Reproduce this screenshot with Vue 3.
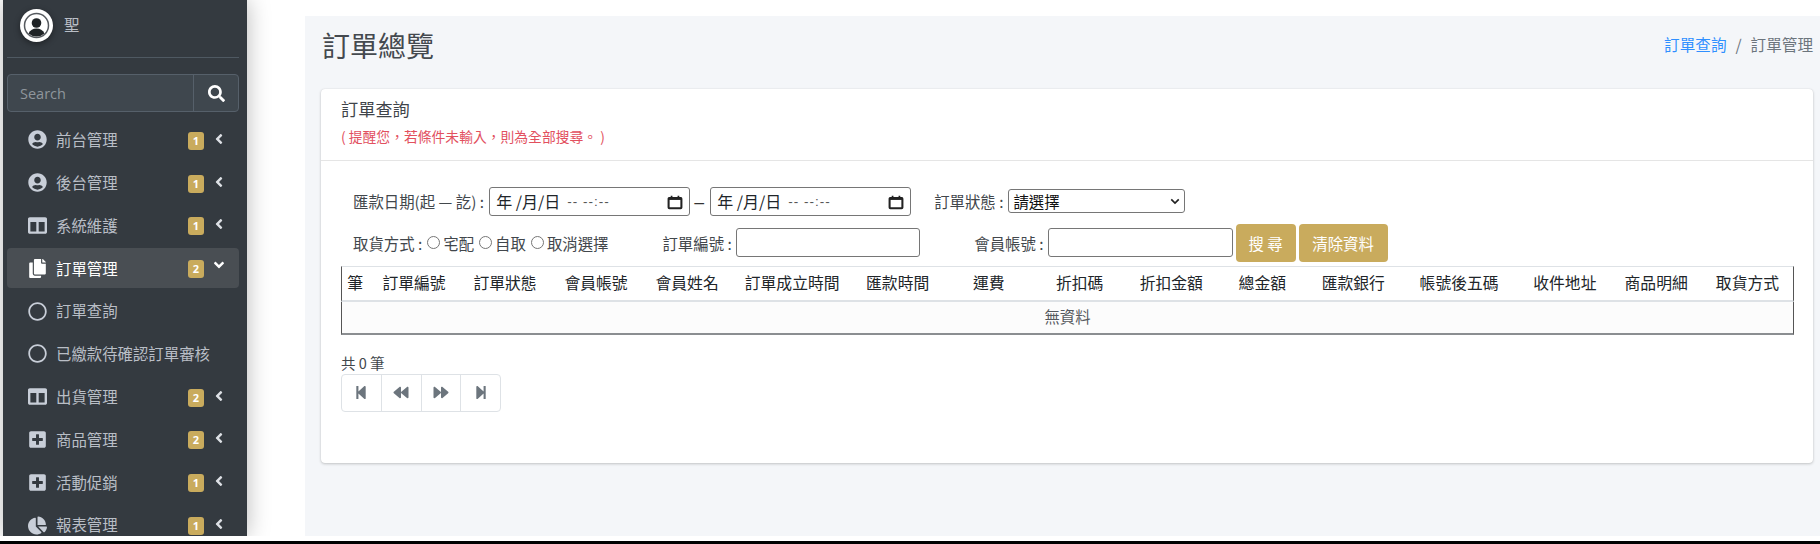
<script setup>
const icons = {
  user: { vb: '0 0 496 512', d: 'M248 8C111 8 0 119 0 256s111 248 248 248 248-111 248-248S385 8 248 8zm0 96c48.6 0 88 39.4 88 88s-39.4 88-88 88-88-39.4-88-88 39.4-88 88-88zm0 344c-58.7 0-111.3-26.6-146.5-68.2 18.8-35.4 55.6-59.8 98.5-59.8 2.4 0 4.8.4 7.1 1.1 13 4.2 26.6 6.9 40.9 6.9 14.3 0 28-2.7 40.9-6.9 2.3-.7 4.7-1.1 7.1-1.1 42.9 0 79.7 24.4 98.5 59.8C359.3 421.4 306.7 448 248 448z' },
  columns: { vb: '0 0 512 512', d: 'M464 32H48C21.49 32 0 53.49 0 80v352c0 26.51 21.49 48 48 48h416c26.51 0 48-21.49 48-48V80c0-26.51-21.49-48-48-48zM224 416H64V160h160v256zm224 0H288V160h160v256z' },
  copy: { vb: '0 0 448 512', d: 'M320 448v40c0 13.255-10.745 24-24 24H24c-13.255 0-24-10.745-24-24V120c0-13.255 10.745-24 24-24h72v296c0 30.879 25.121 56 56 56h168zm0-344V0H152c-13.255 0-24 10.745-24 24v368c0 13.255 10.745 24 24 24h272c13.255 0 24-10.745 24-24V128H344c-13.2 0-24-10.8-24-24zm120.971-31.029L375.029 7.029A24 24 0 0 0 358.059 0H352v96h96v-6.059a24 24 0 0 0-7.029-16.97z' },
  plus: { vb: '0 0 448 512', d: 'M400 32H48C21.5 32 0 53.5 0 80v352c0 26.5 21.5 48 48 48h352c26.5 0 48-21.5 48-48V80c0-26.5-21.5-48-48-48zm-32 252c0 6.6-5.4 12-12 12h-92v92c0 6.6-5.4 12-12 12h-56c-6.6 0-12-5.4-12-12v-92H92c-6.6 0-12-5.4-12-12v-56c0-6.6 5.4-12 12-12h92v-92c0-6.6 5.4-12 12-12h56c6.6 0 12 5.4 12 12v92h92c6.6 0 12 5.4 12 12v56z' },
  pie: { vb: '0 0 544 512', d: 'M527.79 288H290.5l158.03 158.03c6.04 6.04 15.98 6.53 22.19.68 38.7-36.46 65.32-85.61 73.13-140.86 1.34-9.46-6.51-17.85-16.06-17.85zm-15.83-64.8C503.72 103.74 408.26 8.28 288.8.04 279.68-.59 272 7.1 272 16.24V240h223.77c9.14 0 16.82-7.68 16.19-16.8zM224 288V50.71c0-9.55-8.39-17.4-17.84-16.06C86.99 51.49-4.1 155.6.14 280.37 4.5 408.51 114.83 513.59 243.03 511.98c50.4-.63 96.97-16.87 135.26-44.03 7.9-5.6 8.42-17.23 1.57-24.08L224 288z' },
  circle: { vb: '0 0 512 512', d: 'M256 8C119 8 8 119 8 256s111 248 248 248 248-111 248-248S393 8 256 8zm0 448c-110.500 0-200-89.500-200-200S145.500 56 256 56s200 89.500 200 200-89.500 200-200 200z' },
}
const nav = [
  { icon: 'user', label: '前台管理', badge: 1 },
  { icon: 'user', label: '後台管理', badge: 1 },
  { icon: 'columns', label: '系統維護', badge: 1 },
  { icon: 'copy', label: '訂單管理', badge: 2, active: true },
  { icon: 'circle', label: '訂單查詢' },
  { icon: 'circle', label: '已繳款待確認訂單審核' },
  { icon: 'columns', label: '出貨管理', badge: 2 },
  { icon: 'plus', label: '商品管理', badge: 2 },
  { icon: 'plus', label: '活動促銷', badge: 1 },
  { icon: 'pie', label: '報表管理', badge: 1 },
]
const cols = [
  ['筆', 27.5], ['訂單編號', 91], ['訂單狀態', 91], ['會員帳號', 91], ['會員姓名', 91],
  ['訂單成立時間', 119], ['匯款時間', 92], ['運費', 90], ['折扣碼', 92], ['折扣金額', 91],
  ['總金額', 91], ['匯款銀行', 91], ['帳號後五碼', 120.5], ['收件地址', 91], ['商品明細', 91.5], ['取貨方式', 92],
]
const pager = [
  { vb: '0 0 448 512', d: 'M64 468V44c0-6.6 5.4-12 12-12h48c6.6 0 12 5.4 12 12v176.400l195.500-181C352.100 22.300 384 36.600 384 64v384c0 27.400-31.900 41.700-52.500 24.600L136 292.700V468c0 6.600-5.400 12-12 12H76c-6.600 0-12-5.400-12-12z' },
  { vb: '0 0 512 512', d: 'M11.500 280.600l192 160c20.600 17.200 52.500 2.800 52.500-24.600V96c0-27.400-31.900-41.800-52.500-24.600l-192 160c-15.300 12.800-15.300 36.400 0 49.200zm256 0l192 160c20.600 17.200 52.500 2.800 52.500-24.600V96c0-27.400-31.900-41.800-52.500-24.600l-192 160c-15.300 12.800-15.300 36.400 0 49.200z' },
  { vb: '0 0 512 512', d: 'M500.500 231.400l-192-160C287.900 54.300 256 68.600 256 96v320c0 27.400 31.900 41.800 52.500 24.600l192-160c15.300-12.800 15.300-36.400 0-49.200zm-256 0l-192-160C31.900 54.300 0 68.600 0 96v320c0 27.400 31.900 41.800 52.500 24.600l192-160c15.300-12.800 15.300-36.400 0-49.200z' },
  { vb: '0 0 448 512', d: 'M384 44v424c0 6.600-5.400 12-12 12h-48c-6.600 0-12-5.400-12-12V291.600l-195.500 181C95.900 489.700 64 475.400 64 448V64c0-27.400 31.900-41.700 52.500-24.600L312 219.300V44c0-6.600 5.400-12 12-12h48c6.600 0 12 5.400 12 12z' },
]
</script>

<template>
  <div class="page">
    <div class="shell">
      <aside class="sidebar">
        <div class="user">
          <svg class="avatar" viewBox="0 0 33 33">
            <circle cx="16.5" cy="16.500" r="16.500" fill="#fff" />
            <circle cx="16.500" cy="16.500" r="12" fill="none" stroke="#55595e" stroke-width="1.500" />
            <circle cx="16.500" cy="14" r="4.800" fill="#1f2326" />
            <path d="M8.500 24.500c1.600-3.600 4.500-5 8-5s6.400 1.400 8 5a12 12 0 0 1-16 0z" fill="#1f2326" />
          </svg>
          <span class="user-name">聖</span>
        </div>
        <div class="search">
          <span class="search-text">Search</span>
          <span class="search-btn">
            <svg viewBox="0 0 512 512" class="search-icon"><path fill="#fff" d="M505 442.700L405.300 343c-4.500-4.500-10.600-7-17-7H372c27.600-35.300 44-79.700 44-128C416 93.100 322.900 0 208 0S0 93.100 0 208s93.100 208 208 208c48.300 0 92.700-16.400 128-44v16.300c0 6.400 2.500 12.500 7 17l99.700 99.700c9.400 9.400 24.600 9.400 33.900 0l28.300-28.300c9.400-9.400 9.400-24.600.1-34zM208 336c-70.700 0-128-57.200-128-128 0-70.700 57.200-128 128-128 70.700 0 128 57.200 128 128 0 70.700-57.200 128-128 128z" /></svg>
          </span>
        </div>
        <nav class="nav">
          <div v-for="item in nav" :key="item.label" class="nav-item" :class="{ active: item.active }">
            <span class="nav-icon">
              <svg :viewBox="icons[item.icon].vb"><path fill="currentColor" :d="icons[item.icon].d" /></svg>
            </span>
            <span class="nav-label">{{ item.label }}</span>
            <template v-if="item.badge">
              <span class="badge">{{ item.badge }}</span>
              <svg v-if="item.active" class="chev down" viewBox="0 0 320 512"><path fill="#fff" d="M143 352.300L7 216.300c-9.400-9.400-9.400-24.600 0-33.900l22.600-22.600c9.400-9.400 24.600-9.400 33.900 0l96.400 96.400 96.400-96.400c9.400-9.400 24.600-9.400 33.900 0l22.600 22.600c9.400 9.400 9.400 24.600 0 33.900l-136 136c-9.200 9.400-24.400 9.400-33.800 0z" /></svg>
              <svg v-else class="chev" viewBox="0 0 256 512"><path fill="#dde0e5" d="M31.700 239l136-136c9.400-9.400 24.600-9.400 33.900 0l22.600 22.600c9.400 9.400 9.400 24.600 0 33.900L127.900 256l96.400 96.400c9.400 9.400 9.400 24.600 0 33.900L201.700 409c-9.400 9.400-24.600 9.400-33.900 0l-136-136c-9.500-9.400-9.500-24.600-.1-34z" /></svg>
            </template>
          </div>
        </nav>
      </aside>
      <main class="content">
        <header class="head">
          <h1 class="title">訂單總覽</h1>
          <div class="crumbs"><a class="crumb-link">訂單查詢</a><span class="sep">/</span><span>訂單管理</span></div>
        </header>
        <section class="card">
          <div class="card-head">
            <div class="card-title">訂單查詢</div>
            <div class="hint">( 提醒您，若條件未輸入，則為全部搜尋。 )</div>
          </div>
          <div class="card-body">
            <div class="row row-one">
              <span class="lab">匯款日期(起 — 訖) :</span>
              <div class="date"><span class="date-y">年 /月/日</span><span class="date-t">-- --:--</span>
                <svg class="cal" viewBox="0 0 14 14"><path fill="none" stroke="#222" stroke-width="1.800" d="M2 3.500h10a.6.6 0 0 1 .6.6v7.800a.6.6 0 0 1-.6.6H2a.6.6 0 0 1-.6-.6V4.100a.6.6 0 0 1 .6-.6z" /><path stroke="#222" stroke-width="2.400" d="M1.500 4h11" /><path stroke="#222" stroke-width="1.500" d="M4 1.500v2M10 1.500v2" /></svg>
              </div>
              <span class="dash">—</span>
              <div class="date"><span class="date-y">年 /月/日</span><span class="date-t">-- --:--</span>
                <svg class="cal" viewBox="0 0 14 14"><path fill="none" stroke="#222" stroke-width="1.800" d="M2 3.500h10a.6.6 0 0 1 .6.6v7.800a.6.6 0 0 1-.6.6H2a.6.6 0 0 1-.6-.6V4.100a.6.6 0 0 1 .6-.6z" /><path stroke="#222" stroke-width="2.400" d="M1.500 4h11" /><path stroke="#222" stroke-width="1.500" d="M4 1.500v2M10 1.500v2" /></svg>
              </div>
              <span class="lab status-lab">訂單狀態 :</span>
              <div class="select"><span>請選擇</span>
                <svg class="sel-arrow" viewBox="0 0 12 8"><path fill="none" stroke="#222" stroke-width="2" d="M1.500 1.500 6 6l4.500-4.500" /></svg>
              </div>
            </div>
            <div class="row row-two">
              <span class="lab">取貨方式 :</span>
              <span class="radio"></span><span class="radio-text">宅配</span>
              <span class="radio"></span><span class="radio-text">自取</span>
              <span class="radio"></span><span class="radio-text">取消選擇</span>
              <span class="lab order-lab">訂單編號 :</span>
              <span class="text-input"></span>
              <span class="lab member-lab">會員帳號 :</span>
              <span class="text-input member-input"></span>
              <span class="btn btn-search">搜 尋</span>
              <span class="btn btn-clear">清除資料</span>
            </div>
            <table class="grid">
              <colgroup>
                <col v-for="c in cols" :key="c[0]" :style="{ width: c[1] + 'px' }" />
              </colgroup>
              <thead>
                <tr><th v-for="c in cols" :key="c[0]">{{ c[0] }}</th></tr>
              </thead>
              <tbody>
                <tr><td :colspan="cols.length">無資料</td></tr>
              </tbody>
            </table>
            <div class="total">共 0 筆</div>
            <div class="pager">
              <span v-for="(p, i) in pager" :key="i" class="page-btn">
                <svg :viewBox="p.vb"><path fill="#6c757d" :d="p.d" /></svg>
              </span>
            </div>
          </div>
        </section>
      </main>
    </div>
    <div class="strip"></div>
  </div>
</template>

<style>
html, body { margin: 0; padding: 0; background: #fff; overflow: hidden; }
</style>

<style scoped>
.page {
  width: 1820px;
  height: 544px;
  display: flex;
  flex-direction: column;
  overflow: hidden;
  background: #fff;
  font-family: "Noto Sans CJK TC", "Noto Sans", sans-serif;
  font-size: 15.4px;
  color: #212529;
}
.shell { height: 536px; display: flex; flex: none; padding-left: 3px; overflow: hidden; }
.strip { margin-top: 5px; height: 3px; background: #000; flex: none; }
.sidebar {
  width: 244px;
  flex: none;
  background: #343a40;
  box-shadow: 0 0 22px rgba(0, 0, 0, .28);
  padding: 0 8px 0 4px;
  box-sizing: border-box;
  color: #b9bec6;
  position: relative;
  overflow: hidden;
}
.user {
  height: 58px;
  box-sizing: border-box;
  border-bottom: 1px solid #4f5962;
  display: flex;
  align-items: flex-start;
  padding: 9px 0 0 13px;
}
.avatar { width: 33px; height: 33px; filter: drop-shadow(0 2px 3px rgba(0, 0, 0, .4)); }
.user-name { margin-left: 11px; margin-top: 8px; font-size: 15.4px; line-height: 1; }
.search {
  margin-top: 16px;
  height: 38px;
  box-sizing: border-box;
  border: 1px solid #56606a;
  border-radius: 4px;
  background: #3f474e;
  display: flex;
  align-items: center;
}
.search-text { flex: 1; padding-left: 12px; color: #8f969c; font-family: "Open Sans", sans-serif; font-size: 14.500px; }
.search-btn { width: 44px; height: 100%; border-left: 1px solid #56606a; display: flex; align-items: center; justify-content: center; }
.search-icon { width: 17px; height: 17px; }
.nav { margin-top: 6.500px; display: flex; flex-direction: column; }
.nav-item {
  height: 42.800px;
  flex: none;
  display: flex;
  align-items: center;
  box-sizing: border-box;
  padding-left: 20px;
  border-radius: 4px;
  position: relative;
}
.nav-item.active { background: #494e53; color: #fff; height: 40px; margin: 1.400px 0; }
.nav-icon { width: 20px; height: 20px; display: flex; align-items: center; justify-content: center; color: #c8ced8; flex: none; }
.active .nav-icon { color: #fff; }
.nav-icon svg { width: 19px; height: 19px; display: block; }
.nav-label { margin-left: 9px; flex: 1; white-space: nowrap; line-height: 1; }
.badge {
  width: 16px;
  height: 18px;
  border-radius: 3px;
  background: #c9ab5d;
  color: #fff;
  font-family: "Open Sans", sans-serif;
  font-size: 11px;
  font-weight: 700;
  line-height: 18px;
  text-align: center;
  position: absolute;
  left: 181px;
  top: 50%;
  margin-top: -8px;
}
.chev { position: absolute; left: 208px; top: 50%; margin-top: -9px; width: 8px; height: 16px; }
.chev.down { left: 206px; width: 12px; margin-top: -11px; }
.content {
  margin-left: 58px;
  width: 1515px;
  margin-top: 16px;
  height: 520px;
  flex: none;
  background: #f4f6f9;
  box-sizing: border-box;
  padding: 0 7px 0 16px;
  overflow: hidden;
}
.head { height: 72.500px; display: flex; justify-content: space-between; align-items: flex-start; }
.title { margin: 9px 0 0 1px; font-size: 28px; line-height: 40px; font-weight: 400; color: #44494f; }
.crumbs { margin-top: 18px; line-height: 20px; color: #6c757d; white-space: nowrap; font-size: 15.600px; }
.crumb-link { color: #2f8fff; }
.sep { margin: 0 9px; }
.card {
  height: 374px;
  background: #fff;
  border-radius: 4px;
  box-shadow: 0 0 1px rgba(0, 0, 0, .13), 0 1px 3px rgba(0, 0, 0, .2);
  box-sizing: border-box;
}
.card-head { height: 72px; box-sizing: border-box; border-bottom: 1px solid #e5e5e5; padding: 8px 0 0 20px; }
.card-title { font-size: 17.200px; line-height: 24px; color: #3f444a; }
.hint { margin-top: 6px; margin-left: 0; font-size: 13.800px; line-height: 18px; color: #e2505e; }
.card-body { padding: 0 19px 0 20px; }
.row { display: flex; align-items: center; white-space: nowrap; }
.row-one { height: 29px; margin-top: 26px; padding-left: 12px; }
.row-two { height: 38px; margin-top: 8px; padding-left: 12px; }
.lab { color: #42474c; }
.date {
  width: 201px;
  height: 29px;
  box-sizing: border-box;
  margin-left: 5px;
  border: 1px solid #767676;
  border-radius: 3px;
  display: flex;
  align-items: center;
  padding-left: 6px;
  position: relative;
  background: #fff;
}
.date-y { font-size: 16px; }
.date-t { margin-left: 7px; font-size: 13.500px; letter-spacing: 1px; color: #555; font-family: "Liberation Sans", sans-serif; }
.cal { position: absolute; right: 6px; top: 6px; width: 16px; height: 16px; }
.dash { margin: 0 0 0 3px; width: 12px; overflow: hidden; font-size: 12px; text-align: center; color: #333; font-weight: 700; }
.status-lab { margin-left: 23px; }
.select {
  margin-left: 5px;
  width: 177px;
  height: 24px;
  box-sizing: border-box;
  border: 1px solid #767676;
  border-radius: 3px;
  padding-left: 4px;
  display: flex;
  align-items: center;
  justify-content: space-between;
  font-size: 15.400px;
  color: #111;
  background: #fff;
}
.sel-arrow { width: 10px; height: 7px; margin-right: 4px; }
.radio { width: 13px; height: 13px; box-sizing: border-box; border: 1px solid #767676; border-radius: 50%; margin-left: 5px; margin-right: 3px; flex: none; }
.radio-text { color: #42474c; }
.order-lab { margin-left: 54px; }
.text-input { width: 184.500px; height: 29px; box-sizing: border-box; border: 1px solid #767676; border-radius: 3px; margin-left: 4px; flex: none; }
.member-lab { margin-left: 54px; }
.member-input { width: 185px; }
.btn {
  height: 38px;
  border-radius: 4px;
  background: #c9ab5d;
  color: #fff;
  display: flex;
  align-items: center;
  justify-content: center;
  flex: none;
}
.btn-search { width: 60px; margin-left: 3px; }
.btn-clear { width: 89px; margin-left: 3px; }
.grid {
  margin-top: 4px;
  table-layout: fixed;
  width: 1453px;
  border-collapse: separate;
  border-spacing: 0;
  color: #212529;
}
.grid th {
  height: 33px;
  padding: 0;
  font-weight: 400;
  font-size: 15.800px;
  text-align: center;
  border-top: 1px solid #dee2e6;
  border-bottom: 2px solid #dee2e6;
  line-height: 1;
}
.grid th:first-child { border-left: 1px solid #555; }
.grid th:last-child { border-right: 1px solid #555; }
.grid td {
  height: 31px;
  padding: 0;
  text-align: center;
  background: #fcfcfc;
  color: #55595e;
  border-left: 1px solid #555;
  border-right: 1px solid #555;
  border-bottom: 2px solid #8b8e91;
  line-height: 1;
}
.total { margin-top: 18px; height: 20px; line-height: 20px; color: #42474c; font-size: 14.500px; }
.pager {
  margin-top: 1px;
  width: 160px;
  height: 38px;
  box-sizing: border-box;
  display: flex;
  border: 1px solid #dee2e6;
  border-radius: 4px;
  background: #fff;
}
.page-btn { flex: 1; display: flex; align-items: center; justify-content: center; border-left: 1px solid #dee2e6; }
.page-btn:first-child { border-left: 0; }
.page-btn svg { width: 16px; height: 15px; }
</style>
